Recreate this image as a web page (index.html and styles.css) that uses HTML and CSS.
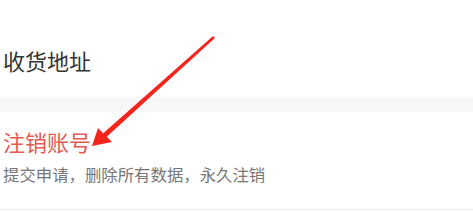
FILE: index.html
```html
<!DOCTYPE html>
<html>
<head>
  <meta charset="UTF-8">
  <link rel="stylesheet" href="styles.css">
</head>
<body>
  <div class="settings-page">
    <div class="settings-item address-item">
      <div class="item-note prev-note">设置默认的收货信息</div>
      <div class="item-title">收货地址</div>
    </div>

    <div class="section-gap"></div>

    <div class="settings-item cancel-item">
      <div class="item-title danger">注销账号</div>
      <div class="item-desc">提交申请，删除所有数据，永久注销</div>
    </div>

    <!-- annotation arrow drawn over the page -->
    <svg class="annotation-arrow" width="473" height="212" viewBox="0 0 473 212">
      <polygon points="92,146 112,142 106.8,136.8 214.9,37.9 213.1,36.1 103.2,133.2 98,128" fill="#f5241c"/>
    </svg>
  </div>
</body>
</html>
```

FILE: styles.css
```css
body {
  margin: 0;
  padding: 0;
  background-color: white;
  font-family: "Noto Sans CJK SC", "Noto Sans", sans-serif;
}
.settings-page {
  position: relative;
  width: 473px;
  height: 212px;
  overflow: hidden;
  background-color: white;
}
.settings-item {
  padding-left: 3px;
}
.prev-note {
  margin-top: -15px;
  font-size: 14px;
  line-height: 14px;
  color: #c4c4c4;
}
.address-item {
  padding-bottom: 26px;
}
.address-item .item-title {
  margin-top: 50px;
}
.item-title {
  font-size: 22px;
  line-height: 22px;
  color: #333;
}
.item-title.danger {
  color: #e45a52;
}
.section-gap {
  height: 15px;
  background-color: #f8f8f8;
}
.cancel-item {
  padding-top: 18px;
  padding-bottom: 26px;
  border-bottom: 1px solid #f0f0f0;
}
.item-desc {
  margin-top: 14px;
  font-size: 16.4px;
  line-height: 17px;
  color: #777;
}
.annotation-arrow {
  position: absolute;
  left: 0;
  top: 0;
  pointer-events: none;
}
```
